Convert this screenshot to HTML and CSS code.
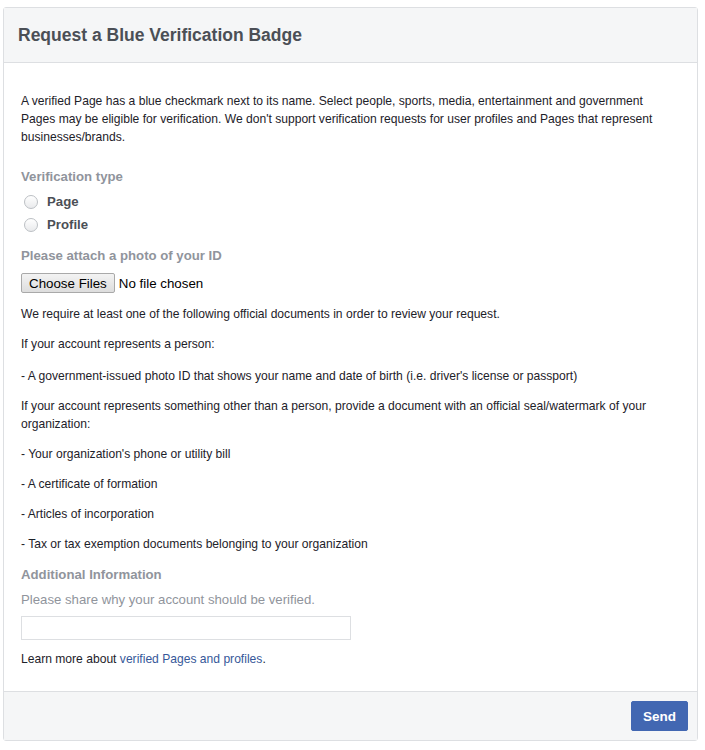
FILE: index.html
```html
<!DOCTYPE html>
<html>
<head>
<meta charset="utf-8">
<link rel="stylesheet" href="styles.css">
</head>
<body>
<div class="card">
  <div class="card-header">
    <h2 class="title">Request a Blue Verification Badge</h2>
  </div>
  <div class="card-body">
    <p class="intro">A verified Page has a blue checkmark next to its name. Select people, sports, media, entertainment and government Pages may be eligible for verification. We don't support verification requests for user profiles and Pages that represent businesses/brands.</p>

    <div class="label">Verification type</div>
    <div class="radios">
      <label class="radio-row"><input type="radio" name="vtype" class="radio"><span>Page</span></label>
      <label class="radio-row"><input type="radio" name="vtype" class="radio"><span>Profile</span></label>
    </div>

    <div class="label label-attach">Please attach a photo of your ID</div>
    <input type="file" class="file" multiple>

    <p class="text">We require at least one of the following official documents in order to review your request.</p>
    <p class="text">If your account represents a person:</p>
    <p class="text text-wide">- A government-issued photo ID that shows your name and date of birth (i.e. driver's license or passport)</p>
    <p class="text">If your account represents something other than a person, provide a document with an official seal/watermark of your organization:</p>
    <p class="text">- Your organization's phone or utility bill</p>
    <p class="text">- A certificate of formation</p>
    <p class="text">- Articles of incorporation</p>
    <p class="text">- Tax or tax exemption documents belonging to your organization</p>

    <div class="label label-info">Additional Information</div>
    <div class="hint">Please share why your account should be verified.</div>
    <input type="text" class="textbox">
    <p class="text learn">Learn more about <a href="#" class="link">verified Pages and profiles</a>.</p>
  </div>
  <div class="card-footer">
    <button class="send">Send</button>
  </div>
</div>
</body>
</html>
```
FILE: styles.css
```css
html, body {
  margin: 0;
  padding: 0;
  background: #ffffff;
}
body {
  font-family: "Liberation Sans", Arial, sans-serif;
  color: #1d2129;
}
.card {
  margin: 7px 0 0 3px;
  width: 693px;
  border: 1px solid #dddfe2;
  border-radius: 3px;
  background: #fff;
}
.card-header {
  background: #f5f6f7;
  border-bottom: 1px solid #dddfe2;
  height: 54px;
  display: flex;
  align-items: center;
  padding-left: 14px;
}
.title {
  margin: 0;
  font-size: 17.5px;
  font-weight: bold;
  color: #4b4f56;
}
.card-body {
  padding: 29px 26px 23px 17px;
}
.intro {
  margin: 0;
  font-size: 12.1px;
  line-height: 18px;
  color: #1d2129;
}
.label {
  font-size: 13.2px;
  font-weight: bold;
  color: #90949c;
  line-height: 18px;
  margin-top: 22px;
}
.radios {
  margin-top: 4px;
}
.radio-row {
  display: flex;
  align-items: center;
  height: 23px;
  font-size: 13.2px;
  font-weight: bold;
  color: #4b4f56;
}
.radio {
  margin: 0 9px 0 3px;
  width: 14px;
  height: 14px;
  appearance: none;
  border: 1px solid #bcc0c4;
  border-radius: 50%;
  background: linear-gradient(#ffffff, #e9eaec);
}
.label-attach {
  margin-top: 11px;
}
.file {
  display: block;
  margin-top: 8px;
  font-family: "Liberation Sans", Arial, sans-serif;
  font-size: 13.33px;
  color: #000;
}
.file::file-selector-button {
  font-family: "Liberation Sans", Arial, sans-serif;
  font-size: 13.33px;
  color: #000;
  background: linear-gradient(#f3f3f3, #dddddd);
  border: 1px solid #a9a9a9;
  border-radius: 2px;
  padding: 1px 7px;
  height: 20px;
  margin-right: 4px;
}
.text {
  margin: 12px 0 0 0;
  font-size: 12.1px;
  line-height: 18px;
  color: #1d2129;
}
.text-wide {
  margin-top: 14px;
}
.label-info {
  margin-top: 13px;
}
.hint {
  font-size: 13.2px;
  color: #90949c;
  margin-top: 7px;
  line-height: 18px;
}
.textbox {
  display: block;
  box-sizing: border-box;
  width: 330px;
  height: 24px;
  margin-top: 7px;
  border: 1px solid #dddfe2;
  padding: 0 4px;
}
.learn {
  margin-top: 10px;
}
.link {
  color: #365899;
  text-decoration: none;
}
.card-footer {
  background: #f5f6f7;
  border-top: 1px solid #dddfe2;
  height: 48px;
  display: flex;
  align-items: center;
  justify-content: flex-end;
  padding-right: 9px;
}
.send {
  background: #4267b2;
  border: 1px solid #4267b2;
  border-radius: 2px;
  color: #fff;
  font-family: "Liberation Sans", Arial, sans-serif;
  font-size: 13.5px;
  font-weight: bold;
  width: 57px;
  height: 30px;
  padding: 0;
}
```
